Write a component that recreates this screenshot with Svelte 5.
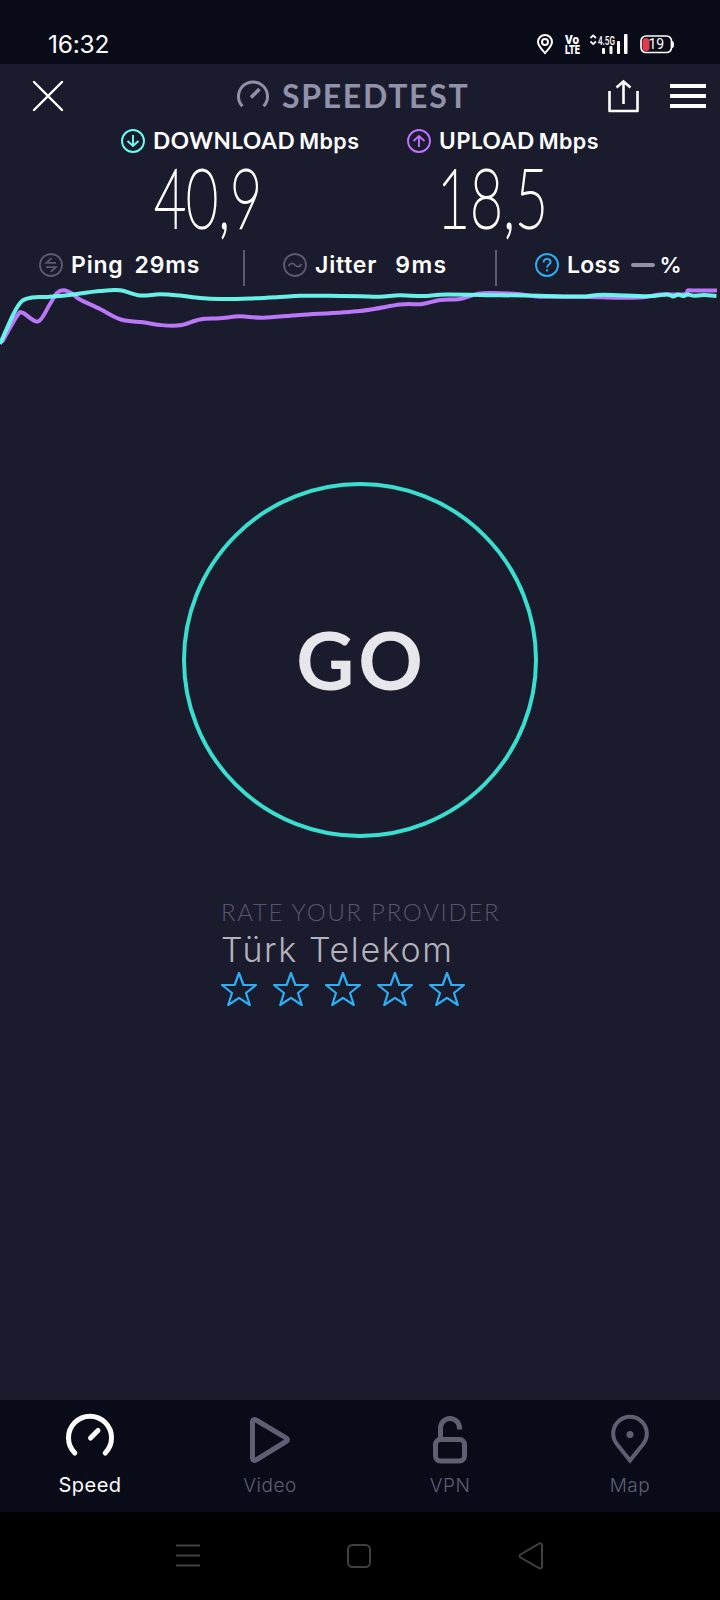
<script lang="ts">
	type Point = [number, number];

	const download: Point[] = [
		[0, 344], [14, 313], [22, 301], [32, 297.5], [45, 297], [63, 295.8], [80, 293.5], [100, 291], [120, 290.3],
		[140, 295.5], [160, 294.2], [180, 295.5], [200, 298], [220, 299], [250, 298.5], [280, 297], [300, 295.7],
		[330, 295.8], [360, 296.3], [380, 296.7], [400, 295.3], [423, 296], [447, 294.5], [500, 295.3],
		[540, 295.7], [580, 296.6], [603, 294.7], [647, 296.3], [667, 294.5], [673, 296.5], [678, 294.5],
		[683, 296], [688, 294.6], [694, 295.8], [704, 295], [716.5, 296]
	];
	const upload: Point[] = [
		[2, 342], [17, 316], [22.7, 312.7], [38, 321.5], [50, 304], [57, 293], [64, 290.2], [72, 293.5], [80, 299.5],
		[100, 309], [121, 319.5], [143, 322.3], [160, 325], [180, 325.3], [200, 319.5], [220, 318.3], [240, 316.3],
		[263, 317.7], [300, 315], [360, 311], [400, 304.5], [422, 304], [440, 300], [460, 299], [478, 293.7],
		[493, 293], [520, 294.3], [540, 296.7], [580, 296.7], [620, 297.7], [643, 297.3], [660, 294.5], [684, 294.3],
		[688, 290.4], [694, 290.4], [717, 290.4]
	];

	// smooth curve through all samples
	function curve(pts: Point[]) {
		let d = `M${pts[0][0]} ${pts[0][1]}`;
		for (let i = 0; i < pts.length - 1; i++) {
			const a = pts[i - 1] ?? pts[i];
			const b = pts[i];
			const c = pts[i + 1];
			const e = pts[i + 2] ?? c;
			d += `C${b[0] + (c[0] - a[0]) / 6} ${b[1] + (c[1] - a[1]) / 6} ${c[0] - (e[0] - b[0]) / 6} ${c[1] - (e[1] - b[1]) / 6} ${c[0]} ${c[1]}`;
		}
		return d;
	}

	let active = $state('Speed');
	let rating = $state(0);
	const tabs = ['Speed', 'Video', 'VPN', 'Map'];
</script>

<div class="screen">
	<div class="status">
		<span class="clock">16:32</span>
		<svg class="status-icons" width="140" height="24" viewBox="534 32 140 24">
			<g fill="none" stroke="#fff" stroke-width="2">
				<path d="M545 53c-3-3.500-7-7-7-11a7 7 0 0 1 14 0c0 4-4 7.500-7 11z" />
				<circle cx="545" cy="42" r="3" />
				<rect x="641" y="36" width="30.500" height="16.500" rx="5" stroke-width="1.700" />
			</g>
			<g fill="#fff" class="tiny">
				<text x="565" y="43.500" font-size="12.500" textLength="14" lengthAdjust="spacingAndGlyphs">Vo</text>
				<text x="565" y="53.700" font-size="12.500" textLength="15" lengthAdjust="spacingAndGlyphs">LTE</text>
				<text x="598" y="45" font-size="13" textLength="17" lengthAdjust="spacingAndGlyphs" class="gen">4.5G</text>
				<rect x="602" y="48" width="3" height="6" rx="1" />
				<rect x="609.500" y="46" width="3" height="8" rx="1" />
				<rect x="617" y="41" width="3" height="13" rx="1" />
				<rect x="624" y="34" width="3.500" height="20" rx="1" />
				<path d="M590.500 38l2.700-2.600 2.700 2.600M590.500 41.500l2.700 2.600 2.700-2.600" fill="none" stroke="#fff" stroke-width="1.800" />
				<path d="M672 41q2 0 2 3.500t-2 3.500z" />
			</g>
			<rect x="642.500" y="38" width="7" height="13" rx="3.500" fill="#e23b4c" />
			<text x="648.500" y="48.800" font-size="14" fill="#fff" textLength="15.500" class="percent">19</text>
		</svg>
	</div>

	<header>
		<button class="close" aria-label="Close">
			<svg width="32" height="32" viewBox="0 0 32 32"><path d="M2 2l28 28M30 2L2 30" stroke="#fff" stroke-width="2.400" stroke-linecap="round" /></svg>
		</button>
		<div class="brand">
			<svg width="34" height="34" viewBox="0 0 34 34" fill="none" stroke="#9191a9" stroke-width="3">
				<path d="M6.400 27.300A14.500 14.500 0 1 1 27.600 27.300" />
				<path d="M15 18.500l8.500-8.500" stroke-width="3.500" />
			</svg>
			<span>SPEEDTEST</span>
		</div>
		<div class="actions">
			<button aria-label="Share">
				<svg width="32" height="34" viewBox="0 0 32 34" fill="none" stroke="#fff" stroke-width="2.600">
					<path d="M1.500 12v20h28V12" stroke-linejoin="round" />
					<path d="M15.500 25V3M8.500 8.500l7-6 7 6" />
				</svg>
			</button>
			<button aria-label="Menu">
				<svg width="36" height="24" viewBox="0 0 36 24" fill="#fff"><path d="M0 0h36v4H0zM0 10h36v4H0zM0 20h36v4H0z" /></svg>
			</button>
		</div>
	</header>

	<div class="results">
		<div class="result">
			<div class="result-head">
				<svg width="24" height="24" viewBox="0 0 24 24" fill="none" stroke="#6afff3" stroke-width="1.900">
					<circle cx="12" cy="12" r="11" /><path d="M12 6v11M6.500 12l5.500 5 5.500-5" />
				</svg>
				<span class="name">DOWNLOAD</span><span class="unit">Mbps</span>
			</div>
			<svg class="value" width="120" height="78" viewBox="0 0 120 78"><text x="-2" y="70" textLength="108" lengthAdjust="spacingAndGlyphs">40,9</text></svg>
		</div>
		<div class="result">
			<div class="result-head">
				<svg width="24" height="24" viewBox="0 0 24 24" fill="none" stroke="#bf71ff" stroke-width="1.900">
					<circle cx="12" cy="12" r="11" /><path d="M12 18V7M6.500 12l5.500-5 5.500 5" />
				</svg>
				<span class="name">UPLOAD</span><span class="unit">Mbps</span>
			</div>
			<svg class="value" width="120" height="78" viewBox="0 0 120 78"><text x="-5" y="70" textLength="111" lengthAdjust="spacingAndGlyphs">18,5</text></svg>
		</div>
	</div>

	<div class="stats">
		<div class="stat ping">
			<svg width="24" height="24" viewBox="0 0 24 24" fill="none" stroke="#5c5c70" stroke-width="1.800">
				<circle cx="12" cy="12" r="11" /><path d="M17 9.800H7.500l5-4.600M7 14.200h9.800l-5 4.600" />
			</svg>
			<span>Ping</span><span class="num">29ms</span>
		</div>
		<div class="stat jitter">
			<svg width="24" height="24" viewBox="0 0 24 24" fill="none" stroke="#5c5c70" stroke-width="1.800">
				<circle cx="12" cy="12" r="11" /><path d="M5.500 13c2-3.500 4.500-3.300 6.500-1s4.500 2.500 6.500-1" />
			</svg>
			<span>Jitter</span><span class="num">9ms</span>
		</div>
		<div class="stat loss">
			<svg width="24" height="24" viewBox="0 0 24 24" fill="none" stroke="#2bb0f5" stroke-width="1.900">
				<circle cx="12" cy="12" r="11" /><path d="M8.600 9.500c0-5 7-4.600 7-.5 0 2.600-3.500 2.600-3.500 5.600M12.100 16.200v2.200" />
			</svg>
			<span>Loss</span><i class="dash"></i><span class="pct">%</span>
		</div>
	</div>

	<svg class="chart" width="720" height="64" viewBox="0 286 720 64" fill="none" stroke-width="4" stroke-linejoin="round">
		<path d={curve(upload)} stroke="#ba78f8" />
		<path d={curve(download)} stroke="#6cfdf0" stroke-opacity=".95" />
	</svg>

	<main>
		<button class="go">GO</button>
		<section class="provider">
			<div class="rate">RATE YOUR PROVIDER</div>
			<div class="isp">Türk Telekom</div>
			<div class="stars">
				{#each [1, 2, 3, 4, 5] as n}
					<button aria-label="{n} stars" onclick={() => (rating = n)}>
						<svg width="38" height="36" viewBox="0 0 38 36" fill={n <= rating ? '#2bb0f5' : 'none'} stroke="#2bb0f5" stroke-width="2.200" stroke-linejoin="round">
							<path d="M19 2l4.400 12H36l-10 8 3.800 12L19 26.800 8.200 34 12 22 2 14h12.600z" />
						</svg>
					</button>
				{/each}
			</div>
		</section>
	</main>

	<nav class="tabs">
		{#each tabs as tab}
			<button class:active={tab === active} onclick={() => (active = tab)}>
				<svg width="52" height="52" viewBox="0 0 52 52" fill="none" stroke="currentColor" stroke-width="5" stroke-linecap="round" stroke-linejoin="round">
					{#if tab === 'Speed'}
						<path d="M10.800 40A21.500 21.500 0 1 1 41.200 40M26.500 25l7.500-7.500" />
					{:else if tab === 'Video'}
						<path d="M8.500 9v36c0 2.500 2 3 3.500 2l30-18.500c2-1.200 2-2.500 0-3.700L12 7c-1.500-1-3.500-.5-3.500 2z" />
					{:else if tab === 'VPN'}
						<rect x="11.500" y="26.500" width="29" height="21.500" rx="5" />
						<path d="M16.500 26V15a9.500 9.500 0 0 1 19 0V16.500" stroke-linecap="butt" />
					{:else}
						<path d="M26 47.500L12.800 31A16.800 16.800 0 1 1 39.200 31z" stroke-width="4" stroke-linejoin="miter" />
						<circle cx="26" cy="21.500" r="3.500" fill="currentColor" stroke="none" />
					{/if}
				</svg>
				<span>{tab}</span>
			</button>
		{/each}
	</nav>

	<div class="system">
		<svg width="24" height="24" viewBox="0 0 24 24" stroke="#404040" stroke-width="2"><path d="M0 1.500h24M0 11.500h24M0 21.500h24" /></svg>
		<svg width="24" height="24" viewBox="0 0 24 24" fill="none" stroke="#404040" stroke-width="2"><rect x="1" y="1" width="22" height="22" rx="4.500" /></svg>
		<svg width="26" height="28" viewBox="0 0 26 28" fill="none" stroke="#404040" stroke-width="2"><path d="M24 3.500v20.500c0 2-1.500 2.800-3 2L2.500 15.500q-2-1.500 0-3L21 1.700c1.500-.9 3 0 3 1.800z" /></svg>
	</div>
</div>

<style>
	:global(body) {
		background: #1b1b2e;
	}
	.screen {
		width: 720px;
		height: 1600px;
		display: flex;
		flex-direction: column;
		overflow: hidden;
		background: #1b1b2e;
		color: #fff;
		font-family: Lato, 'Open Sans', sans-serif;
	}
	svg {
		display: block;
		flex: none;
	}
	button {
		padding: 0;
		border: 0;
		background: none;
		color: inherit;
		font: inherit;
	}
	.status {
		height: 64px;
		box-sizing: border-box;
		padding: 32px 46px 8px 48px;
		display: flex;
		justify-content: space-between;
		background: #0a0b19;
	}
	.clock {
		font-family: Inter, sans-serif;
		font-size: 24.500px;
		line-height: 24px;
		letter-spacing: -0.2px;
	}
	.tiny {
		font-family: Roboto, sans-serif;
		font-weight: 900;
	}
	.gen {
		font-family: Roboto, sans-serif;
		font-weight: 500;
	}
	.percent {
		font-family: Roboto, sans-serif;
		font-weight: 400;
	}
	header {
		height: 64px;
		display: grid;
		grid-template-columns: 236px 1fr 112px;
		align-items: center;
	}
	.close {
		justify-self: start;
		margin-left: 32px;
	}
	.brand {
		display: flex;
		align-items: center;
		gap: 12px;
		color: #9191a9;
		font-size: 32px;
		line-height: 36px;
		font-weight: 700;
		letter-spacing: 1.700px;
	}
	.actions {
		display: flex;
		align-items: center;
		gap: 30px;
	}
	.results {
		display: grid;
		grid-template-columns: 286px 1fr;
		padding-left: 121px;
		height: 120px;
	}
	.result-head {
		display: flex;
		align-items: center;
		height: 25px;
		font-size: 22.500px;
		font-weight: 700;
		letter-spacing: 0.6px;
	}
	.name {
		margin-left: 8px;
	}
	.unit {
		margin-left: 4px;
		font-family: Inter, sans-serif;
		font-size: 21.500px;
		font-weight: 600;
		letter-spacing: 0.4px;
	}
	.value {
		margin: 5px 0 0 35px;
		overflow: visible;
	}
	.value text {
		font-family: Lato, sans-serif;
		font-size: 83px;
		font-weight: 100;
		fill: #fff;
		stroke: #fff;
		stroke-width: 2.200px;
	}
	.stats {
		height: 38px;
		display: grid;
		grid-template-columns: 245px 252px 1fr;
		font-family: Inter, sans-serif;
		font-size: 23px;
		font-weight: 600;
		letter-spacing: 0.8px;
	}
	.stat {
		display: flex;
		align-items: center;
		box-sizing: border-box;
		height: 36px;
		margin-top: 2px;
		padding-bottom: 7px;
		border-right: 2px solid #5c5c70;
	}
	.stat span {
		margin-left: 8px;
	}
	.ping {
		padding-left: 39px;
	}
	.jitter {
		padding-left: 38px;
	}
	.loss {
		padding-left: 38px;
		border: 0;
	}
	.stat.ping .num {
		margin-left: 11px;
	}
	.stat.jitter .num {
		margin-left: 18px;
		letter-spacing: 1.500px;
	}
	.loss span {
		letter-spacing: 0.3px;
	}
	.dash {
		width: 24px;
		height: 4px;
		margin-left: 11px;
		border-radius: 2px;
		background: #9191a9;
	}
	.stat .pct {
		margin-left: 4px;
		font-size: 22px;
	}
	main {
		flex: 1;
		display: flex;
		flex-direction: column;
		align-items: center;
		padding-top: 132px;
	}
	.go {
		width: 356px;
		height: 356px;
		padding: 0 0 3px 3px;
		border: 4px solid #38dfcf;
		border-radius: 50%;
		color: #e7e6ea;
		font-size: 80px;
		font-weight: 700;
		letter-spacing: 4px;
	}
	.provider {
		width: 278px;
		padding-top: 59px;
		white-space: nowrap;
	}
	.rate {
		color: #57576c;
		font-size: 24px;
		line-height: 30px;
		font-weight: 300;
		letter-spacing: 1.700px;
	}
	.isp {
		padding-top: 2px;
		color: #b3b2bb;
		font-family: Inter, sans-serif;
		font-size: 34px;
		line-height: 42px;
		font-weight: 300;
		letter-spacing: 1.600px;
	}
	.stars {
		display: flex;
		gap: 14px;
		margin-left: -1px;
	}
	.tabs {
		height: 112px;
		display: grid;
		grid-template-columns: repeat(4, 1fr);
		background: #0a0b19;
	}
	.tabs button {
		display: flex;
		flex-direction: column;
		align-items: center;
		padding-top: 13px;
		color: #5f5f73;
		font-family: Inter, sans-serif;
		font-size: 19px;
		font-weight: 300;
		line-height: 24px;
		letter-spacing: 0.5px;
	}
	.tabs span {
		margin-top: 9px;
	}
	.tabs .active {
		color: #fff;
		font-size: 20px;
		font-weight: 400;
	}
	.tabs .active span {
		margin-top: 8px;
	}
	.system {
		height: 88px;
		display: flex;
		align-items: center;
		justify-content: space-between;
		padding: 0 176px;
		box-sizing: border-box;
		background: #000;
	}
</style>
